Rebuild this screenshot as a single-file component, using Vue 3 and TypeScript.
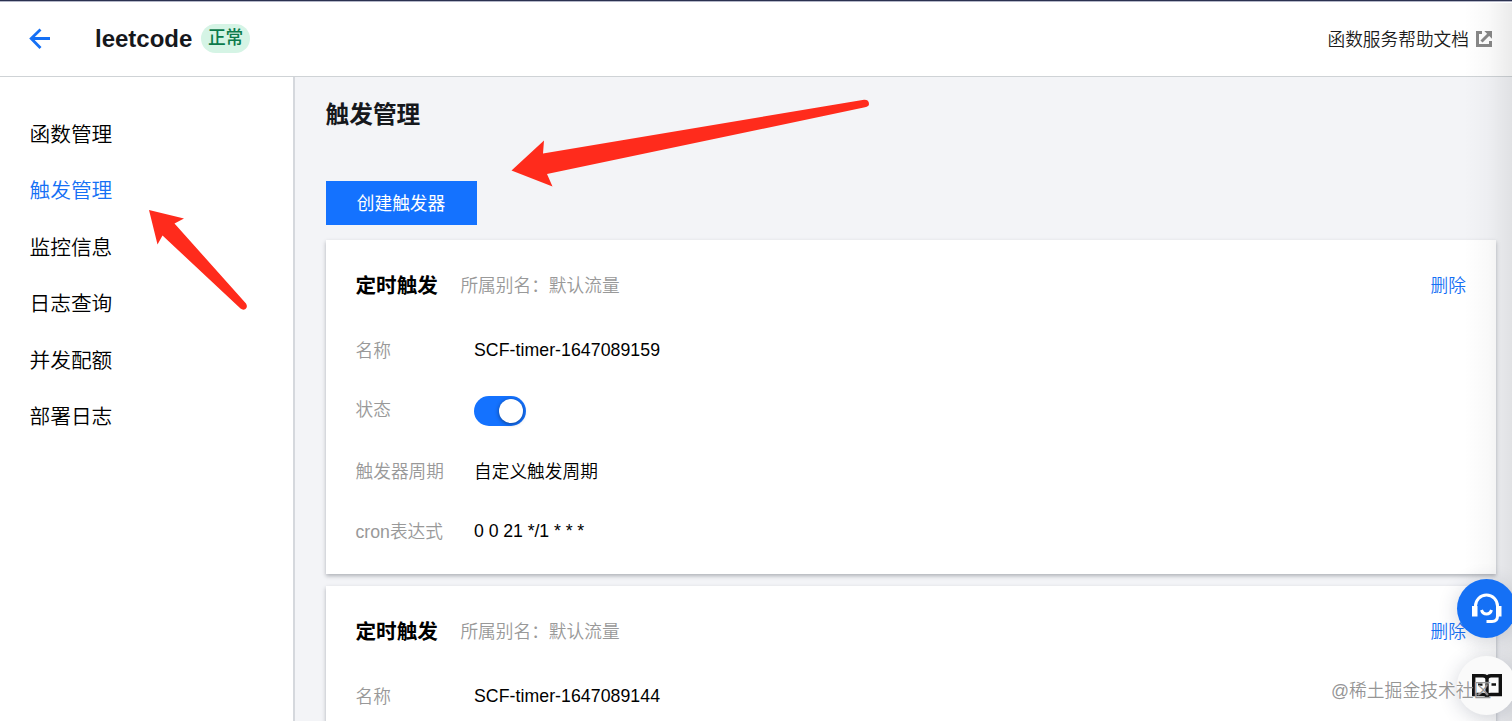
<script setup lang="ts">
import { ref } from 'vue'

type NavItem = {
    key: string
    label: string
}

type Trigger = {
    id: number
    name: string
    enabled?: boolean
    period?: string
    cron?: string
}

const navItems: NavItem[] = [
    { key: 'function', label: '函数管理' },
    { key: 'trigger', label: '触发管理' },
    { key: 'monitor', label: '监控信息' },
    { key: 'log', label: '日志查询' },
    { key: 'quota', label: '并发配额' },
    { key: 'deploy', label: '部署日志' },
]

const activeKey = ref('trigger')

const triggers = ref<Trigger[]>([
    { id: 1, name: 'SCF-timer-1647089159', enabled: true, period: '自定义触发周期', cron: '0 0 21 */1 * * *' },
    { id: 2, name: 'SCF-timer-1647089144' },
])

function removeTrigger(id: number) {
    triggers.value = triggers.value.filter((t) => t.id !== id)
}
</script>

<template>
    <div class="page">
        <header class="header">
            <svg class="back" width="22" height="22" viewBox="0 0 22 22">
                <path d="M11.500 1.500 2.200 10.500l9.300 9.500M2.500 10.500H21" />
            </svg>
            <h1 class="header-title">leetcode</h1>
            <span class="badge">正常</span>
            <a class="help">
                <span class="help-text">函数服务帮助文档</span>
                <svg class="help-icon" width="16" height="16" viewBox="0 0 16 16">
                    <path d="M6 1.500H1.500v13h13V10" />
                    <path d="M5.500 10.500 12.500 3.500" />
                    <path class="help-tip" d="M8.300 0H16v7.700z" />
                </svg>
            </a>
        </header>

        <div class="body">
            <nav class="sidebar">
                <a
                    v-for="item in navItems"
                    :key="item.key"
                    class="nav-item"
                    :class="{ active: item.key === activeKey }"
                    @click="activeKey = item.key"
                >
                    {{ item.label }}
                </a>
            </nav>

            <main class="main">
                <h2 class="main-title">触发管理</h2>
                <button class="create-btn" type="button">创建触发器</button>

                <section v-for="t in triggers" :key="t.id" class="card">
                    <div class="card-head">
                        <h3 class="card-title">定时触发</h3>
                        <span class="card-alias">所属别名：默认流量</span>
                        <a class="card-remove" @click="removeTrigger(t.id)">删除</a>
                    </div>
                    <div class="row">
                        <span class="row-label">名称</span>
                        <span class="row-value name">{{ t.name }}</span>
                    </div>
                    <div v-if="t.enabled !== undefined" class="row row-switch">
                        <span class="row-label">状态</span>
                        <span class="switch" :class="{ on: t.enabled }" @click="t.enabled = !t.enabled"></span>
                    </div>
                    <div v-if="t.period" class="row">
                        <span class="row-label">触发器周期</span>
                        <span class="row-value period">{{ t.period }}</span>
                    </div>
                    <div v-if="t.cron" class="row">
                        <span class="row-label">cron表达式</span>
                        <span class="row-value cron">{{ t.cron }}</span>
                    </div>
                </section>
            </main>
        </div>

        <svg class="arrows" width="1512" height="721" viewBox="0 0 1512 721">
            <path d="M511.500 170.500 544 140.500 543 153.500 864 99.700Q869 99.500 869 104 869 106.500 865 107.300L547 174 552.500 186.500Z" />
            <path d="M149 210 184 218.500 174.500 223.500 246 303.500Q248 307 245.500 309 243 310.500 240.500 308.500L162.500 235.500 157.500 244.500Z" />
        </svg>

        <div class="edge-shade"></div>

        <div class="float-btn float-service">
            <svg width="32" height="32" viewBox="0 0 32 32">
                <path d="M4.500 15v-2a11 11 0 0 1 22 0v10q0 5.500-5.500 5.500H15.500" />
                <path d="M10.500 17q1.200 4 5 4t5-4" />
                <path class="solid" d="M1 13H6.500v10.500H1zM25 13h5.500v10.500H25z" />
            </svg>
        </div>
        <div class="float-btn float-docs">
            <svg width="30" height="26" viewBox="0 0 30 26">
                <path d="M1.700 2.700H11q4 0 4 3.300 0-3.300 4-3.300h9.300v18.800H19q-4 0-4 2.500 0-2.500-4-2.500H1.700zM15 6v17" />
                <path class="thin" d="M6 11.500h4.500M19.500 11.500H24" />
            </svg>
        </div>
        <div class="watermark">@稀土掘金技术社区</div>
    </div>
</template>

<style scoped>
.page {
    position: relative;
    display: flex;
    flex-direction: column;
    width: 100%;
    height: 721px;
    overflow: hidden;
    box-sizing: border-box;
    border-top: 1px solid #2b3150;
    background: #fff;
    color: #000;
    font-family: "Liberation Sans", "Noto Sans CJK SC", sans-serif;
    font-size: 17.7px;
    font-weight: 350;
}

h1,
h2,
h3 {
    margin: 0;
}

.header {
    display: flex;
    flex: none;
    align-items: center;
    height: 76px;
    padding: 0 20px 0 29px;
    box-sizing: border-box;
    border-top: 1px solid #b4b7c8;
    border-bottom: 1px solid #cfd3d6;
}

.back {
    fill: none;
    stroke: #1570f5;
    stroke-width: 2.8;
}

.header-title {
    margin-left: 44px;
    font-size: 24px;
    line-height: 30px;
    color: #16181c;
}

.badge {
    margin: -2px 0 0 8.500px;
    padding: 0 7px;
    border-radius: 15px;
    background: #d5f4e5;
    color: #0b7a4b;
    font-size: 17.7px;
    font-weight: 500;
    line-height: 29px;
}

.help {
    display: flex;
    align-items: center;
    gap: 7px;
    margin-left: auto;
    color: #1c1c1c;
}

.help-text {
    padding-bottom: 3px;
}

.help-icon {
    fill: none;
    stroke: #888;
    stroke-width: 3;
}

.help-tip {
    fill: #888;
    stroke: none;
}

.body {
    display: flex;
    flex: 1;
    min-height: 0;
}

.sidebar {
    flex: none;
    width: 295px;
    padding-top: 30px;
    box-sizing: border-box;
    border-right: 2px solid #d5d8dd;
}

.nav-item {
    display: block;
    padding-left: 29.5px;
    font-size: 20.7px;
    line-height: 56.4px;
    cursor: pointer;
}

.nav-item.active {
    color: #1570f5;
}

.main {
    flex: 1;
    padding: 20px 16px 0 31px;
    background: #f3f4f7;
}

.main-title {
    margin-left: -0.5px;
    font-size: 23.7px;
    line-height: 36px;
    color: #16181c;
}

.create-btn {
    display: block;
    width: 151px;
    height: 44px;
    margin: 48px 0 15px;
    padding: 0 1px 2px 0;
    border: 0;
    background: #1472ff;
    color: #fff;
    font-family: inherit;
    font-size: 17.7px;
}

.card {
    height: 334px;
    margin-bottom: 12px;
    padding: 29px 30px 0 29.5px;
    box-sizing: border-box;
    background: #fff;
    box-shadow: 0 2px 4px rgba(54, 58, 70, 0.36);
}

.card-head {
    display: flex;
    align-items: center;
    height: 30px;
    margin-bottom: 21px;
}

.card-title {
    font-size: 20.6px;
}

.card-alias {
    margin-left: 22.5px;
    color: #999;
}

.card-remove {
    margin-left: auto;
    color: #1570f5;
    cursor: pointer;
}

.row {
    display: flex;
    align-items: center;
    height: 60px;
}

.row-switch {
    height: 61px;
}

.row-label {
    width: 118.5px;
    padding-bottom: 3px;
    color: #999;
}

.row-switch .row-label {
    padding-bottom: 5px;
}

.row-value {
    color: #000;
}

.row-value.name {
    letter-spacing: 0.06px;
}

.row-value.period {
    padding-bottom: 3px;
}

.row-value.cron {
    letter-spacing: -0.06px;
}

.switch {
    width: 52px;
    height: 30px;
    padding: 3px;
    box-sizing: border-box;
    border-radius: 15px;
    background: #bbb;
}

.switch::before {
    content: "";
    display: block;
    width: 24px;
    height: 24px;
    border-radius: 50%;
    background: #fff;
    box-shadow: 0 1px 4px rgba(0, 0, 0, 0.45);
}

.switch.on {
    background: #1472ff;
}

.switch.on::before {
    margin-left: 22px;
}

.arrows {
    position: absolute;
    top: -1px;
    left: 0;
    fill: #ff2b1c;
    pointer-events: none;
}

.edge-shade {
    position: absolute;
    top: 2px;
    right: 0;
    bottom: 0;
    width: 48px;
    background: linear-gradient(to right, rgba(0, 0, 0, 0), rgba(0, 0, 0, 0.025) 50%, rgba(0, 0, 0, 0.08));
    pointer-events: none;
}

.float-btn {
    position: absolute;
    display: flex;
    align-items: center;
    justify-content: center;
    width: 59px;
    height: 59px;
    border-radius: 50%;
    box-shadow: 0 3px 20px rgba(40, 50, 80, 0.2);
}

.float-btn svg {
    fill: none;
    stroke-width: 3;
}

.float-service {
    top: 578px;
    left: 1457px;
    background: #1570f5;
}

.float-service svg {
    stroke: #fff;
}

.float-service .solid {
    fill: #fff;
    stroke: none;
}

.float-docs {
    top: 655px;
    left: 1457px;
    background: #fafafa;
}

.float-docs svg {
    stroke: #111;
    stroke-width: 3.4;
}

.float-docs .thin {
    stroke-width: 2.6;
}

.watermark {
    position: absolute;
    top: 677px;
    left: 1331px;
    color: rgba(130, 130, 130, 0.85);
    font-size: 17.8px;
    line-height: 26px;
    white-space: nowrap;
    text-shadow: 0 0 1px #fff;
}
</style>
